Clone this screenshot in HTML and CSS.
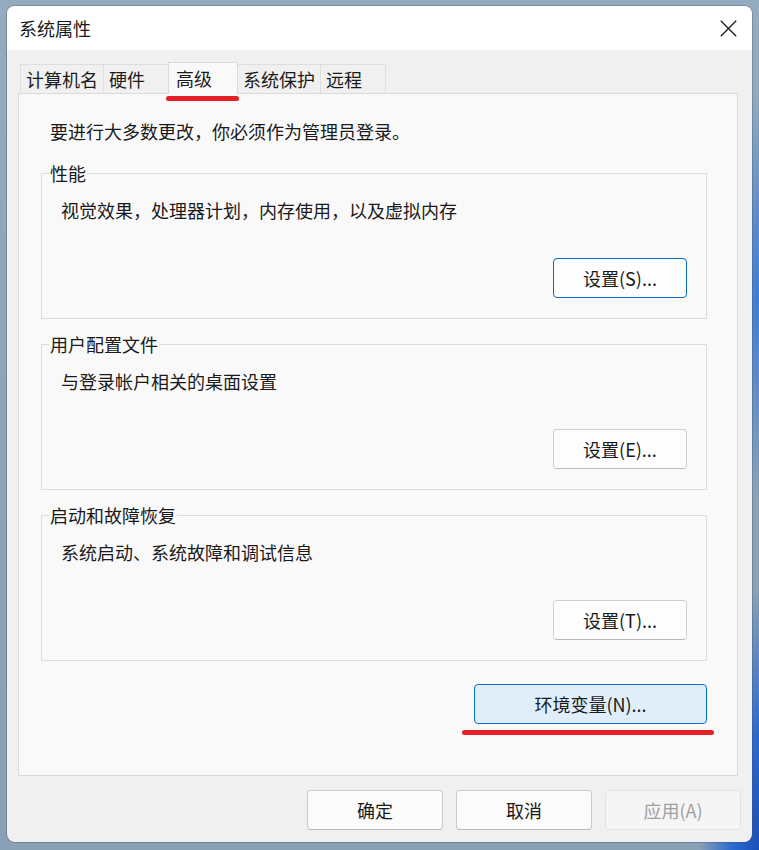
FILE: index.html
```html
<!DOCTYPE html>
<html lang="zh-CN">
<head>
<meta charset="utf-8">
<title>系统属性</title>
<link rel="stylesheet" href="styles.css">
</head>
<body>
<div class="window">
  <div class="titlebar">
    <span class="title">系统属性</span>
    <span class="close" aria-label="关闭">
      <svg width="17" height="17" viewBox="0 0 17 17"><path d="M0.8 0.8 L16.2 16.2 M16.2 0.8 L0.8 16.2" stroke="#1a1a1a" stroke-width="1.3" fill="none"/></svg>
    </span>
  </div>
  <div class="content">
    <div class="tabs">
      <div class="tab">计算机名</div>
      <div class="tab">硬件</div>
      <div class="tab active">高级<span class="tab-mark"></span></div>
      <div class="tab">系统保护</div>
      <div class="tab">远程</div>
    </div>
    <div class="panel">
      <p class="intro">要进行大多数更改，你必须作为管理员登录。</p>
      <div class="group">
        <span class="legend">性能</span>
        <p class="desc">视觉效果，处理器计划，内存使用，以及虚拟内存</p>
        <button class="btn btn-group btn-focus">设置(S)...</button>
      </div>
      <div class="group">
        <span class="legend">用户配置文件</span>
        <p class="desc">与登录帐户相关的桌面设置</p>
        <button class="btn btn-group">设置(E)...</button>
      </div>
      <div class="group">
        <span class="legend">启动和故障恢复</span>
        <p class="desc">系统启动、系统故障和调试信息</p>
        <button class="btn btn-group">设置(T)...</button>
      </div>
      <button class="btn btn-env">环境变量(N)...</button>
      <div class="env-mark"></div>
    </div>
    <div class="footer">
      <button class="btn btn-foot">确定</button>
      <button class="btn btn-foot">取消</button>
      <button class="btn btn-foot btn-disabled">应用(A)</button>
    </div>
  </div>
</div>
</body>
</html>
```
FILE: styles.css
```css
* { box-sizing: border-box; }
html, body { margin: 0; padding: 0; }
body {
  width: 759px;
  height: 850px;
  overflow: hidden;
  font-family: "Noto Sans CJK SC", "Noto Sans", sans-serif;
  color: #1a1a1a;
  background:
    radial-gradient(ellipse 60px 260px at 100% 100%, #1b4fb8 0%, #2b6ad0 45%, rgba(60,120,210,0) 100%),
    radial-gradient(ellipse 40px 200px at 100% 35%, #3a7ad8 0%, rgba(90,150,220,0) 100%),
    linear-gradient(180deg, #95abbf 0%, #8ba2b7 60%, #8aa0b5 100%);
  padding: 6px 0 0 7px;
}
.window {
  width: 745px;
  height: 836px;
  border-radius: 8px;
  background: #f0f0f0;
  overflow: hidden;
  box-shadow: 0 0 0 1px rgba(70, 80, 95, 0.35);
  display: flex;
  flex-direction: column;
}
.titlebar {
  height: 44px;
  background: #ffffff;
  display: flex;
  align-items: center;
  justify-content: space-between;
  padding-left: 12px;
  flex: none;
}
.title {
  font-size: 18px;
  line-height: 24px;
}
.close {
  width: 48px;
  height: 44px;
  display: flex;
  align-items: center;
  justify-content: center;
}
.content {
  padding: 12px 14px 0 11px;
  display: flex;
  flex-direction: column;
}
.tabs {
  display: flex;
  align-items: flex-end;
  height: 31px;
  padding-left: 2px;
  position: relative;
  z-index: 1;
}
.tab {
  min-width: 66px;
  height: 29px;
  padding: 0 5px;
  font-size: 18px;
  line-height: 28px;
  border: 1px solid #dedede;
  border-bottom: none;
  margin-right: -1px;
  background: #f0f0f0;
  white-space: nowrap;
}
.tab.active {
  position: relative;
  min-width: 70px;
  height: 32px;
  margin-bottom: -1px;
  padding-left: 7px;
  line-height: 31px;
  background: #f9f9f9;
  border-color: #dadada;
  z-index: 2;
}
.tab-mark {
  position: absolute;
  left: -3px;
  top: calc(100% + 2px);
  width: 73px;
  height: 5px;
  border-radius: 3px;
  background: #e51f26;
}
.panel {
  height: 683px;
  background: #f9f9f9;
  border: 1px solid #dadada;
  padding: 25px 30px 0 22px;
  display: flex;
  flex-direction: column;
}
.intro {
  margin: 0;
  padding-left: 9px;
  font-size: 18px;
  line-height: 24px;
}
.group {
  position: relative;
  height: 146px;
  margin-top: 30px;
  border: 1px solid #dcdcdc;
  padding: 24px 19px 20px 19px;
  display: flex;
  flex-direction: column;
}
.group + .group { margin-top: 25px; }
.legend {
  position: absolute;
  left: 7px;
  top: -13px;
  padding: 0 1px;
  background: #f9f9f9;
  font-size: 18px;
  line-height: 24px;
}
.desc {
  margin: 0;
  font-size: 18px;
  line-height: 24px;
}
.btn {
  font-family: "Noto Sans CJK SC", "Noto Sans", sans-serif;
  font-size: 18px;
  line-height: 24px;
  height: 40px;
  padding: 0;
  color: #1a1a1a;
  background: #fdfdfd;
  border: 1px solid #d0d0d0;
  border-bottom-color: #bcbcbc;
  border-radius: 4px;
}
.btn-group {
  width: 134px;
  margin-top: auto;
  align-self: flex-end;
}
.btn-focus {
  border: 1px solid #0a6cc4;
}
.btn-env {
  width: 233px;
  margin-top: 23px;
  margin-right: 0;
  align-self: flex-end;
  background: #e0eef9;
  border: 1px solid #0a6cc4;
}
.env-mark {
  width: 252px;
  height: 5px;
  margin-top: 6px;
  margin-right: -7px;
  align-self: flex-end;
  border-radius: 3px;
  background: #e51f26;
}
.footer {
  display: flex;
  justify-content: flex-end;
  gap: 13px;
  margin-top: 14px;
  margin-right: -3px;
}
.btn-foot {
  width: 136px;
  background: #fbfbfb;
  border-color: #cccccc;
  border-bottom-color: #b9b9b9;
}
.btn-disabled {
  color: #a0a0a0;
  background: #f5f5f5;
  border-color: #e3e3e3;
}
```
